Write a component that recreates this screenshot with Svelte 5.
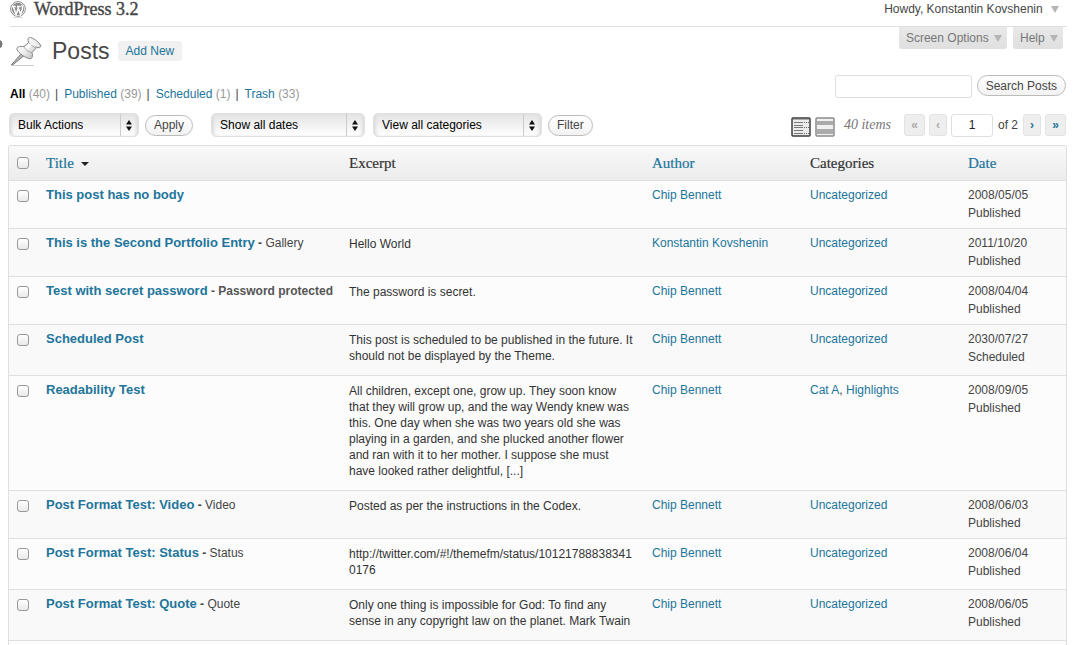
<script>
  const views = [
    { label: 'All', count: 40, current: true },
    { label: 'Published', count: 39 },
    { label: 'Scheduled', count: 1 },
    { label: 'Trash', count: 33 }
  ];

  const filters = [
    { id: 'bulk', name: 'Bulk Actions', size: 'short', button: 'Apply' },
    { id: 'dates', name: 'Show all dates', size: 'medium' },
    { id: 'cats', name: 'View all categories', size: 'long', button: 'Filter' }
  ];

  const posts = [
    { title: 'This post has no body', excerpt: '', date: '2008/05/05' },
    { title: 'This is the Second Portfolio Entry', format: 'Gallery', excerpt: 'Hello World', author: 'Konstantin Kovshenin', date: '2011/10/20' },
    { title: 'Test with secret password', state: 'Password protected', excerpt: 'The password is secret.', date: '2008/04/04' },
    { title: 'Scheduled Post', excerpt: 'This post is scheduled to be published in the future. It should not be displayed by the Theme.', date: '2030/07/27', status: 'Scheduled' },
    { title: 'Readability Test', excerpt: 'All children, except one, grow up. They soon know that they will grow up, and the way Wendy knew was this. One day when she was two years old she was playing in a garden, and she plucked another flower and ran with it to her mother. I suppose she must have looked rather delightful, [...]', categories: ['Cat A', 'Highlights'], date: '2008/09/05' },
    { title: 'Post Format Test: Video', format: 'Video', excerpt: 'Posted as per the instructions in the Codex.', date: '2008/06/03' },
    { title: 'Post Format Test: Status', format: 'Status', excerpt: 'http://twitter.com/#!/themefm/status/101217888383410176', date: '2008/06/04' },
    { title: 'Post Format Test: Quote', format: 'Quote', excerpt: 'Only one thing is impossible for God: To find any sense in any copyright law on the planet. Mark Twain', date: '2008/06/05' }
  ];
</script>

<div class="page">
  <svg class="menu-edge" width="3" height="10" viewBox="0 0 3 10" aria-hidden="true"><path d="M0 1 Q2.5 2 2.5 5 Q2.5 8 0 9z" fill="#777" /></svg>

  <header>
    <svg class="logo" width="16" height="17" viewBox="0 0 16 17" aria-hidden="true">
      <circle cx="8" cy="8" r="7.4" fill="#fff" stroke="#8c8c8c" />
      <circle cx="8" cy="8" r="6.2" fill="#8c8c8c" />
      <path d="M2 5.4h3.8M7 5.4h3.6M3.2 5.4l2.9 8 2.1-6M7.7 5.4l2.9 8 2-6.1c.6-1.8-.8-2-1-3.1" fill="none" stroke="#fff" stroke-width="1.5" />
      <path d="M3 16.5h10" stroke="#ddd" />
    </svg>
    <h1><a href="#site">WordPress 3.2</a></h1>
    <button class="howdy" type="button">Howdy, Konstantin Kovshenin <i class="tri"></i></button>
  </header>

  <div class="heading-row">
    <div class="heading">
      <svg width="33" height="32" viewBox="0 0 33 32" aria-hidden="true">
        <defs>
          <linearGradient id="pin" x1="0" y1="0" x2="1" y2="1">
            <stop offset="0" stop-color="#fff" /><stop offset=".5" stop-color="#eee" /><stop offset="1" stop-color="#a5a5a5" />
          </linearGradient>
        </defs>
        <path d="M3 30.500h22" stroke="#ccc" />
        <path d="M12 19L2.300 30l2-.6L14.500 21z" fill="#bbb" stroke="#777" stroke-linejoin="round" />
        <path d="M8 14.500c-.8-2.500 2.500-3.500 7-3l4.700-4c-1.200-2.500-1-4.600.7-5 2.500-.5 10 4.500 11.300 8.100.2 2-1.500 2.500-4.200 1.900l-4.500 5c1.200 4-.2 6.500-2 6.300-4.500-.8-11.500-5.300-13-9.300z" fill="url(#pin)" stroke="#858585" stroke-linejoin="round" />
        <path d="M15 11.500c.5 2.500 4.500 5.800 8 6M19.700 7.500c1.300 2.500 4.500 4.800 7.800 5" fill="none" stroke="#999" stroke-width=".8" />
        <path d="M16.800 11.800l4-3.300 1.700 1.700-4 3.600z" fill="#fff" />
        <path d="M21.500 4c1 2.500 4.500 5.500 8.500 6.800" fill="none" stroke="#fff" />
      </svg>
      <h2>Posts</h2>
      <a class="add" href="#new">Add New</a>
    </div>
    <div class="tabs">
      <button type="button">Screen Options <i class="tri"></i></button>
      <button type="button">Help <i class="tri"></i></button>
    </div>
  </div>

  <div class="views-row">
    <ul>
      {#each views as v}
        <li><a href="#{v.label}" class:current={v.current}>{v.label}</a> <span>({v.count})</span></li>
      {/each}
    </ul>
    <form class="search">
      <input type="text" aria-label="Search posts" />
      <button class="pill" type="button">Search Posts</button>
    </form>
  </div>

  <div class="tablenav">
    {#each filters as f}
      <div class="filter {f.size}">
        <select id={f.id} aria-label={f.name}><option>{f.name}</option></select>
        <svg width="6" height="11" viewBox="0 0 6 11" aria-hidden="true"><path d="M3 0l3 4.500H0zM3 11L0 6.500h6z" fill="#111" /></svg>
      </div>
      {#if f.button}<button class="pill {f.id}" type="button">{f.button}</button>{/if}
    {/each}

    <div class="modes">
      <button type="button" aria-label="List view">
        <svg width="20" height="20" viewBox="0 0 20 20">
          <rect x="1" y="1" width="18" height="18" rx="1" fill="#ececec" stroke="#3c3c3c" stroke-width="1.500" />
          <path d="M2 2.500h16" stroke="#aaa" />
          <path d="M3 5.500h9M3 8.500h9M3 10.500h9M3 13.500h9M3 16.500h9" stroke="#777" />
          <path d="M13 5.500h5M13 10.500h5M13 16.500h5" stroke="#666" stroke-dasharray="1 1" />
        </svg>
      </button>
      <button type="button" aria-label="Excerpt view">
        <svg width="20" height="20" viewBox="0 0 20 20">
          <rect x="1" y="1" width="18" height="18" rx="1" fill="#f0f0f0" stroke="#8a8a8a" stroke-width="1.500" />
          <path d="M2 4h16v4H2zM2 12h16v5H2z" fill="#aaa" />
        </svg>
      </button>
    </div>

    <div class="paging">
      <em>40 items</em>
      <a class="wide off" href="#first" aria-label="First page">«</a>
      <a class="off" href="#prev" aria-label="Previous page">‹</a>
      <input type="text" value="1" aria-label="Current page" />
      <span>of 2</span>
      <a href="#next" aria-label="Next page">›</a>
      <a class="wide" href="#last" aria-label="Last page">»</a>
    </div>
  </div>

  <div class="frame">
    <table>
      <colgroup><col class="c-check" /><col /><col /><col class="c-mid" /><col class="c-mid" /><col class="c-date" /></colgroup>
      <thead>
        <tr>
          <th class="check"><input type="checkbox" aria-label="Select all" /></th>
          <th><a href="#title">Title <i class="sort"></i></a></th>
          <th>Excerpt</th>
          <th><a href="#author">Author</a></th>
          <th>Categories</th>
          <th><a href="#date">Date</a></th>
        </tr>
      </thead>
      <tbody>
        {#each posts as p}
          <tr>
            <td class="check"><input type="checkbox" aria-label="Select {p.title}" /></td>
            <td class="title">
              <strong><a href="#post">{p.title}</a>{#if p.state}{' '}- {p.state}{/if}</strong>{#if p.format}<b>{' '}-</b> {p.format}{/if}
            </td>
            <td class="excerpt">{p.excerpt}</td>
            <td><a href="#author">{p.author ?? 'Chip Bennett'}</a></td>
            <td>
              {#each p.categories ?? ['Uncategorized'] as c, i}{#if i}{', '}{/if}<a href="#category">{c}</a>{/each}
            </td>
            <td>{p.date}<br />{p.status ?? 'Published'}</td>
          </tr>
        {/each}
      </tbody>
    </table>
  </div>
</div>

<style>
  :global(html), :global(body) { height: 100%; }
  :global(body) { margin: 0; background: #fff; }
  .page {
    position: relative;
    display: flex;
    flex-direction: column;
    box-sizing: border-box;
    min-height: 100vh;
    padding: 0 11px 0 8px;
    font: 12px/18px "Liberation Sans", Arial, sans-serif;
    color: #444;
  }
  a { color: #21759b; text-decoration: none; }
  button, input, select { font: inherit; margin: 0; box-sizing: border-box; }
  button { border: 0; background: none; padding: 0; color: #464646; white-space: nowrap; }
  h1, h2, ul { margin: 0; padding: 0; }
  .menu-edge { position: absolute; left: 0; top: 39px; }
  .tri {
    display: inline-block;
    border: 4px solid transparent;
    border-top: 7px solid #b5b5b5;
    border-bottom: 0;
    margin-left: 2px;
  }

  header {
    display: flex;
    align-items: center;
    height: 26px;
    margin-left: 2px;
    border-bottom: 1px solid #dfdfdf;
  }
  header > * { margin-bottom: 8px; }
  .logo { margin-right: 8px; }
  h1 { font: 18px/20px "Liberation Serif", serif; -webkit-text-stroke: 0.4px #464646; }
  h1 a { color: #464646; }
  .howdy { margin-left: auto; padding-right: 8px; }
  .howdy .tri { margin-left: 5px; }

  .heading-row { display: flex; justify-content: space-between; align-items: flex-start; height: 48px; }
  .heading { display: flex; align-items: center; padding: 8px 0 0 1px; }
  h2 { font: 23px/32px "Liberation Sans", sans-serif; margin: 0 8px 0 10px; color: #464646; }
  .add { background: #f1f1f1; border-radius: 3px; padding: 1px 8px; }
  .tabs { display: flex; gap: 6px; padding-right: 4px; }
  .tabs button {
    height: 22px;
    padding: 0 5px 0 7px;
    color: #777;
    background: linear-gradient(#e9e9e9, #dfdfdf);
    border-radius: 0 0 3px 3px;
  }

  .views-row { display: flex; justify-content: space-between; height: 28px; }
  ul { display: flex; list-style: none; padding: 10px 0 0 2px; }
  li + li::before { content: "|"; margin: 0 6px 0 5px; }
  li span { color: #999; }
  .current { color: #000; font-weight: bold; }
  .search { display: flex; align-items: flex-start; gap: 5px; padding-right: 1px; }
  input[type="text"] {
    border: 1px solid #dfdfdf;
    border-radius: 3px;
    background: #fff;
    color: #222;
    height: 23px;
    padding: 0 4px;
  }
  .search input { width: 137px; }
  .pill {
    height: 21px;
    padding: 0 8px;
    border: 1px solid #bbb;
    border-radius: 11px;
    background: linear-gradient(#fff, #f2f2f2);
  }

  .tablenav { display: flex; align-items: center; height: 24px; margin: 10px 0 8px; }
  .filter { position: relative; height: 24px; }
  .filter select {
    appearance: none;
    width: 100%;
    height: 24px;
    border: 1px solid #e0e0e0;
    border-radius: 5px;
    padding: 0 24px 0 8px;
    color: #000;
    background: linear-gradient(#e4e4e4, #fff);
    box-shadow: inset 3px 0 3px -1px #ddd, inset -3px 0 3px -1px #ddd;
  }
  .filter svg { position: absolute; right: 7px; top: 7px; }
  .filter::after { content: ""; position: absolute; right: 18px; top: 1px; bottom: 1px; border-left: 1px solid #ccc; }
  .short { width: 130px; margin-left: 1px; }
  .medium { width: 154px; margin: 0 8px 0 18px; }
  .long { width: 169px; }
  .pill.bulk, .pill.cats { margin-left: 6px; }
  .modes { display: flex; gap: 4px; margin: 3px 9px 0 auto; }
  .modes button, .modes svg { display: block; height: 20px; }
  .paging { display: flex; align-items: center; gap: 4px; padding-right: 1px; }
  .paging em { font: italic 14px/20px "Liberation Serif", serif; color: #777; margin-right: 9px; }
  .paging a {
    width: 16px;
    height: 20px;
    line-height: 20px;
    text-align: center;
    font-weight: bold;
    background: #eee;
    border: 1px solid #e3e3e3;
    border-radius: 3px;
  }
  .paging a.wide { width: 19px; }
  .paging a.off { color: #aaa; }
  .paging input { width: 42px; text-align: center; }
  .paging span { margin: 0 1px; }

  .frame { flex: 1; border: 1px solid #dfdfdf; border-bottom: 0; border-radius: 3px 3px 0 0; overflow: hidden; background: #fcfcfc; }
  table { width: 100%; table-layout: fixed; border-spacing: 0; }
  .c-check { width: 30px; }
  .c-mid { width: 158px; }
  .c-date { width: 105px; }
  th {
    height: 33px;
    padding: 0 7px 1px;
    text-align: left;
    font: 15px/20px "Liberation Serif", serif;
    -webkit-text-stroke: 0.2px;
    color: #333;
    background: linear-gradient(#f9f9f9, #ececec);
    border-bottom: 1px solid #dfdfdf;
  }
  td { padding: 5px 7px 6px; vertical-align: top; border-bottom: 1px solid #dfdfdf; background: #fcfcfc; }
  tr:nth-child(even) td { background: #f9f9f9; }
  .title { white-space: nowrap; }
  .title strong { color: #555; }
  .title strong a { font-size: 13px; }
  .excerpt { padding: 7px 10px 11px 7px; line-height: 16px; color: #333; overflow-wrap: break-word; }
  .check { padding: 0 0 0 8px; }
  td.check { padding-top: 9px; }
  .check input {
    appearance: none;
    display: block;
    width: 12px;
    height: 12px;
    border: 1px solid #999;
    border-radius: 3px;
    background: linear-gradient(#fff, #e9e9e9);
  }
  .sort { display: inline-block; border: 4px solid transparent; border-top-color: #222; border-bottom: 0; vertical-align: 2px; margin-left: 3px; }
</style>
